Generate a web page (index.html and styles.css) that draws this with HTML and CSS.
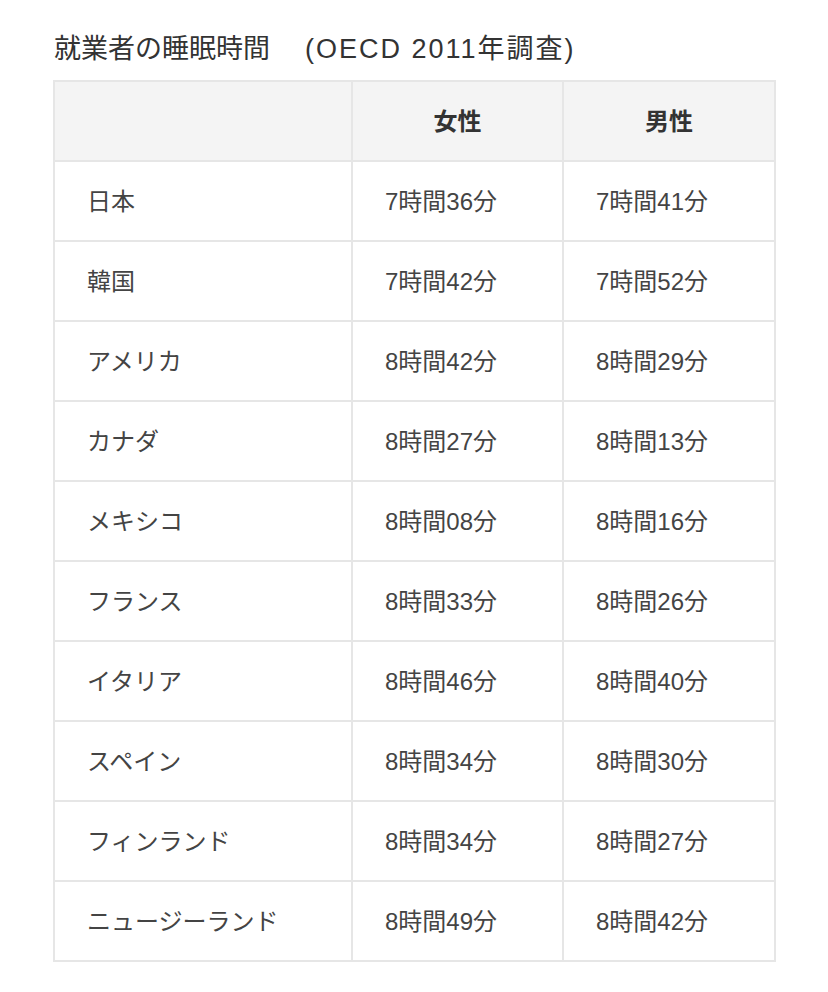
FILE: index.html
```html
<!DOCTYPE html>
<html lang="ja">
<head>
<meta charset="utf-8">
<link rel="stylesheet" href="styles.css">
</head>
<body>
<div class="wrap">
  <h2 class="title">就業者の睡眠時間　<span class="title-sub">(OECD 2011年調査)</span></h2>
  <table class="sleep">
    <thead>
      <tr><th class="c1"></th><th class="c2">女性</th><th class="c3">男性</th></tr>
    </thead>
    <tbody>
      <tr><td>日本</td><td>7時間36分</td><td>7時間41分</td></tr>
      <tr><td>韓国</td><td>7時間42分</td><td>7時間52分</td></tr>
      <tr><td>アメリカ</td><td>8時間42分</td><td>8時間29分</td></tr>
      <tr><td>カナダ</td><td>8時間27分</td><td>8時間13分</td></tr>
      <tr><td>メキシコ</td><td>8時間08分</td><td>8時間16分</td></tr>
      <tr><td>フランス</td><td>8時間33分</td><td>8時間26分</td></tr>
      <tr><td>イタリア</td><td>8時間46分</td><td>8時間40分</td></tr>
      <tr><td>スペイン</td><td>8時間34分</td><td>8時間30分</td></tr>
      <tr><td>フィンランド</td><td>8時間34分</td><td>8時間27分</td></tr>
      <tr><td>ニュージーランド</td><td>8時間49分</td><td>8時間42分</td></tr>
    </tbody>
  </table>
</div>
</body>
</html>
```

FILE: styles.css
```css
html, body {
  margin: 0;
  padding: 0;
  background: #fff;
}
body {
  font-family: "Liberation Sans", "Noto Sans CJK JP", sans-serif;
  color: #333;
}
.wrap {
  padding: 29px 0 0 53px;
  width: 721px;
}
.title {
  margin: 0 0 11px 1px;
  font-size: 27px;
  font-weight: 400;
  line-height: 40px;
  color: #333;
}
.title-sub {
  letter-spacing: 2px;
  margin-left: 8px;
}
.sleep {
  width: 721px;
  border-collapse: collapse;
  table-layout: fixed;
  font-size: 24px;
  color: #444;
}
.sleep th, .sleep td {
  border: 2px solid #e6e6e6;
  height: 80px;
  padding: 0 0 3px;
  box-sizing: border-box;
}
.sleep .c1 { width: 298px; }
.sleep .c2 { width: 211px; }
.sleep .c3 { width: 212px; }
.sleep th {
  background: #f4f4f4;
  font-weight: 700;
  color: #333;
  text-align: center;
}
.sleep td {
  text-align: left;
  padding-left: 32px;
}
```
